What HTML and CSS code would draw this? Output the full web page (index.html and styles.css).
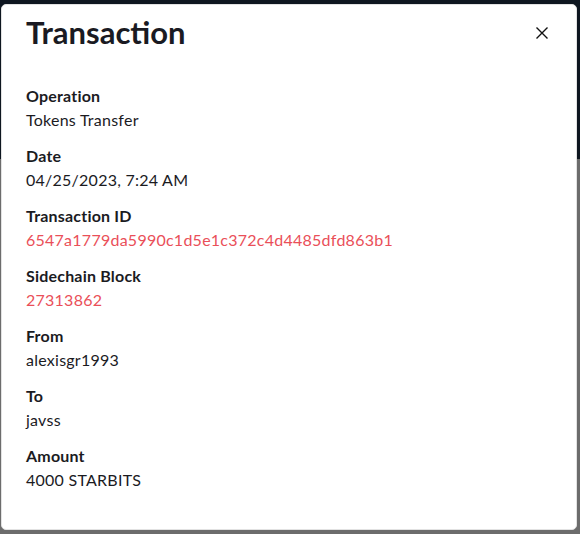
FILE: index.html
```html
<!DOCTYPE html>
<html lang="en">
<head>
<meta charset="utf-8">
<title>Transaction</title>
<link rel="stylesheet" href="styles.css">
</head>
<body>
<div class="page">
  <header class="page-header"></header>
  <main class="page-body"></main>
</div>
<div class="backdrop">
  <div class="modal" role="dialog" aria-labelledby="modal-title">
    <div class="modal-head">
      <h2 id="modal-title" class="modal-title">Transaction</h2>
      <button class="close" aria-label="Close">
        <svg width="12" height="12" viewBox="0 0 12 12" aria-hidden="true">
          <path d="M0.5 0.5 L11.5 11.5 M11.5 0.5 L0.5 11.5" stroke="#111" stroke-width="1.4" fill="none"/>
        </svg>
      </button>
    </div>
    <dl class="details">
      <div class="item"><dt>Operation</dt><dd>Tokens Transfer</dd></div>
      <div class="item"><dt>Date</dt><dd>04/25/2023, 7:24 AM</dd></div>
      <div class="item"><dt>Transaction ID</dt><dd class="link">6547a1779da5990c1d5e1c372c4d4485dfd863b1</dd></div>
      <div class="item"><dt>Sidechain Block</dt><dd class="link">27313862</dd></div>
      <div class="item"><dt>From</dt><dd>alexisgr1993</dd></div>
      <div class="item"><dt>To</dt><dd>javss</dd></div>
      <div class="item"><dt>Amount</dt><dd>4000 STARBITS</dd></div>
    </dl>
  </div>
</div>
</body>
</html>
```

FILE: styles.css
```css
html, body {
  margin: 0;
  padding: 0;
  height: 100%;
}
body {
  font-family: Lato, "Noto Sans", sans-serif;
  color: #1b1b1f;
  overflow: hidden;
}
.page {
  height: 100%;
  display: flex;
  flex-direction: column;
}
.page-header {
  height: 159px;
  background: #1d2d40;
}
.page-body {
  flex: 1;
  background: #d8d8d8;
}
.backdrop {
  position: fixed;
  inset: 0;
  background: rgba(0, 0, 0, 0.5);
  padding: 4px 3px 4px 1px;
  box-sizing: border-box;
  display: flex;
}
.modal {
  flex: 1;
  background: #fff;
  border-radius: 5px;
  border: 1px solid #e2e2e2;
  padding: 0 24px;
  box-sizing: border-box;
}
.modal-head {
  display: flex;
  align-items: center;
  justify-content: space-between;
  height: 54px;
  margin-bottom: 25px;
}
.modal-title {
  margin: 0;
  font-size: 31px;
  font-weight: 700;
  color: #1a1a22;
}
.close {
  border: 0;
  background: none;
  padding: 0;
  margin-right: 4px;
  margin-top: 1px;
  width: 12px;
  height: 12px;
  display: flex;
}
.details {
  margin: 0;
  display: flex;
  flex-direction: column;
  gap: 12px;
}
.item dt {
  font-weight: 700;
  font-size: 16px;
  line-height: 24px;
  letter-spacing: 0.2px;
}
.item dd {
  margin: 0;
  font-size: 16px;
  line-height: 24px;
  letter-spacing: 0.25px;
}
.item dd.link {
  color: #ea4f59;
}
```
